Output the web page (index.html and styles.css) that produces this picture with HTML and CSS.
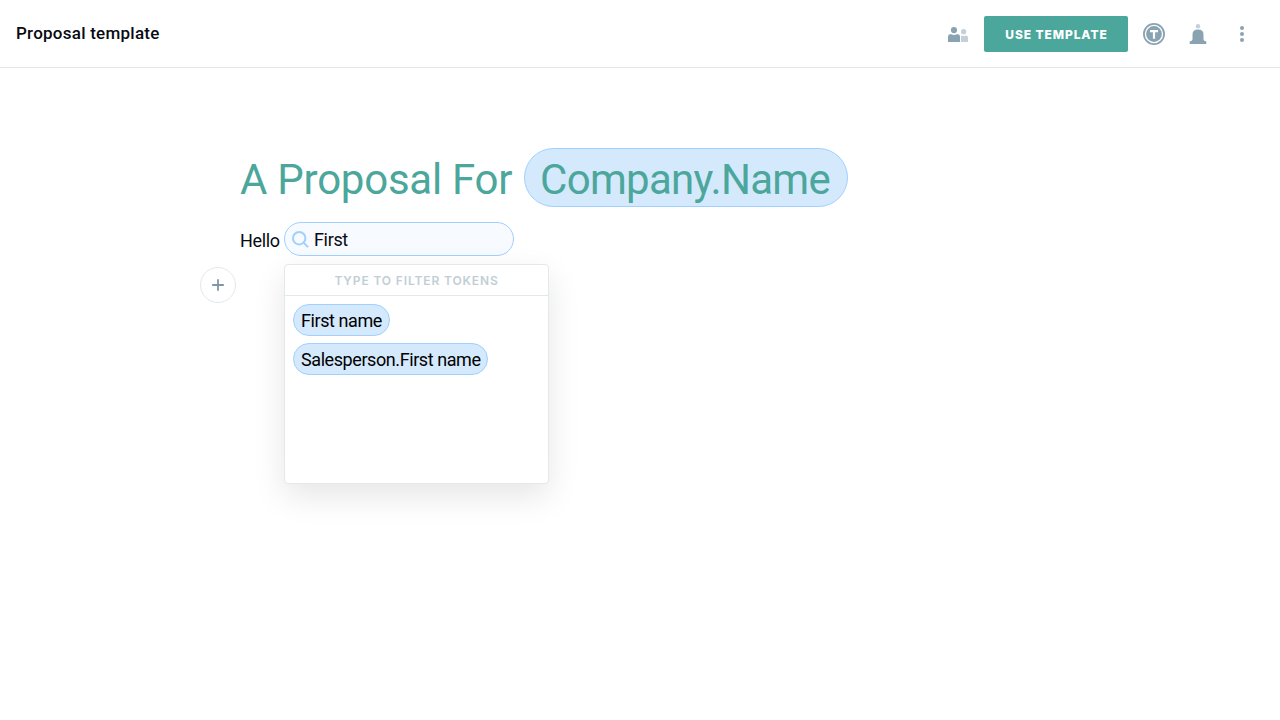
FILE: index.html
```html
<!DOCTYPE html>
<html lang="en">
<head>
<meta charset="utf-8">
<title>Proposal template</title>
<link rel="stylesheet" href="styles.css">
</head>
<body>
<header class="topbar">
  <div class="doc-name">Proposal template</div>
  <nav class="actions">
    <svg class="icon-people" width="20" height="16" viewBox="0 0 20 16"><g fill="#8aa3b3"><circle cx="6" cy="3.100" r="3.100"/><path d="M0 15V9.500Q0 7.200 2.300 7.200H3.200Q6 8.600 8.800 7.200H9.700Q12 7.200 12 9.500V15Z"/></g><g fill="#c4d0d8"><circle cx="15.600" cy="4.700" r="2.600"/><path d="M13 15V9.600Q13 8.500 14 8.500Q15.800 9.600 17.600 8.500Q20 8.500 20 10.500V15Z"/></g></svg>
    <button class="use-button">USE TEMPLATE</button>
    <svg class="icon-token" width="22" height="22" viewBox="0 0 22 22"><circle cx="11" cy="11" r="10.100" fill="none" stroke="#8aa3b3" stroke-width="1.800"/><circle cx="11" cy="11" r="7.900" fill="#8aa3b3"/><path d="M7 8.200H15M11 8.200V15.700" fill="none" stroke="#fff" stroke-width="2.200"/></svg>
    <svg class="icon-bell" width="18" height="20" viewBox="0 0 18 20"><circle cx="9" cy="2.200" r="2.200" fill="#c4d0d8"/><path d="M3.500 10.500Q3.500 5.500 9 5.500T14.500 10.500V15.500Q14.600 17 17.300 17.600V20H.7V17.600Q3.400 17 3.500 15.500Z" fill="#8aa3b3"/></svg>
    <svg class="icon-more" width="4" height="16" viewBox="0 0 4 16" fill="#8aa3b3"><circle cx="2" cy="2" r="2"/><circle cx="2" cy="8" r="2"/><circle cx="2" cy="14" r="2"/></svg>
  </nav>
</header>
<main class="document">
  <h1 class="heading"><span class="heading-text">A Proposal For</span><span class="heading-token"><span class="token-text">Company.Name</span></span></h1>
  <div class="paragraph">
    <span class="hello">Hello</span>
    <div class="search">
      <svg width="17" height="17" viewBox="0 0 17 17" fill="none" stroke="#9fd0ff" stroke-width="2"><circle cx="7.200" cy="7.200" r="6.200"/><path d="M11.600 11.600L15.600 15.600" stroke-linecap="round"/></svg>
      <span class="query">First</span>
    </div>
  </div>
  <div class="insert-row">
    <button class="add" aria-label="Add"><svg width="12" height="12" viewBox="0 0 12 12"><path d="M6 .2V11.800M.2 6H11.800" stroke="#7d97a8" stroke-width="1.800"/></svg></button>
    <section class="menu">
      <div class="menu-title">TYPE TO FILTER TOKENS</div>
      <div class="menu-list">
        <span class="token token-first">First name</span>
        <span class="token token-sales">Salesperson.First name</span>
      </div>
    </section>
  </div>
</main>
</body>
</html>
```
FILE: styles.css
```css
* { box-sizing: border-box; }
body { min-height: 720px; margin: 0; background: #fff; color: #070a12; font-family: Roboto, "Liberation Sans", sans-serif; }
svg { display: block; flex: none; }
button { font-family: inherit; padding: 0; }
.topbar { display: flex; justify-content: space-between; height: 68px; padding: 0 36px 0 16px; border-bottom: 1px solid #e1e9ea; }
.doc-name { padding-top: 23px; font-size: 17px; line-height: 20px; font-weight: 500; letter-spacing: .25px; white-space: nowrap; }
.actions { display: flex; align-items: center; height: 68px; }
.icon-people { margin: 2px 16px 0 0; }
.use-button { width: 144px; height: 36px; padding: 1px 0 0 1px; border: 0; border-radius: 2px; background: #4ba69b; color: #fff; font-family: Inter, sans-serif; font-size: 12px; font-weight: 800; letter-spacing: .9px; white-space: nowrap; }
.icon-token { margin-left: 15px; }
.icon-bell { margin-left: 24px; }
.icon-more { margin-left: 33px; }
.document { padding: 80px 0 0 200px; }
.heading { display: flex; height: 59px; margin: 0; padding-left: 40px; color: #4ba69b; font-size: 42px; line-height: 53px; font-weight: 400; white-space: nowrap; }
.heading-text { width: 284px; padding-top: 5px; letter-spacing: -.25px; }
.heading-token { width: 324px; padding: 4px 0 0 15px; border: 1px solid #9fd0ff; border-radius: 30px; background: #d5e9fd; letter-spacing: -.7px; }
.paragraph { display: flex; margin-top: 15px; padding-left: 40px; font-size: 18px; line-height: 22px; letter-spacing: -.35px; }
.hello { width: 44px; padding-top: 8px; }
.search { display: flex; width: 230px; height: 34px; padding: 8px 7px 0; gap: 5px; border: 1px solid #9fd0ff; border-radius: 17px; background: #f7faff; }
.query { margin-top: -2px; }
.insert-row { display: flex; gap: 48px; margin-top: 8px; }
.add { display: flex; align-items: center; justify-content: center; width: 36px; height: 36px; margin-top: 3px; border: 1px solid #e1e9ea; border-radius: 50%; background: #fff; }
.menu { width: 265px; height: 220px; border: 1px solid #e1e9ea; border-radius: 4px; background: #fff; box-shadow: 0 12px 32px rgba(0, 0, 0, .1); }
.menu-title { height: 31px; padding-top: 1px; border-bottom: 1px solid #e1e9ea; color: #c1ced6; font-family: Inter, sans-serif; font-size: 12px; line-height: 30px; font-weight: 600; letter-spacing: .87px; text-align: center; white-space: nowrap; }
.menu-list { display: flex; flex-direction: column; align-items: flex-start; gap: 7px; padding: 8px; }
.token { height: 32px; padding: 1px 0 0 7px; border: 1px solid #9fd0ff; border-radius: 16px; background: #d5e9fd; color: #000; font-size: 18px; line-height: 30px; letter-spacing: -.42px; white-space: nowrap; }
.token-first { width: 97px; }
.token-sales { width: 195px; }
```
